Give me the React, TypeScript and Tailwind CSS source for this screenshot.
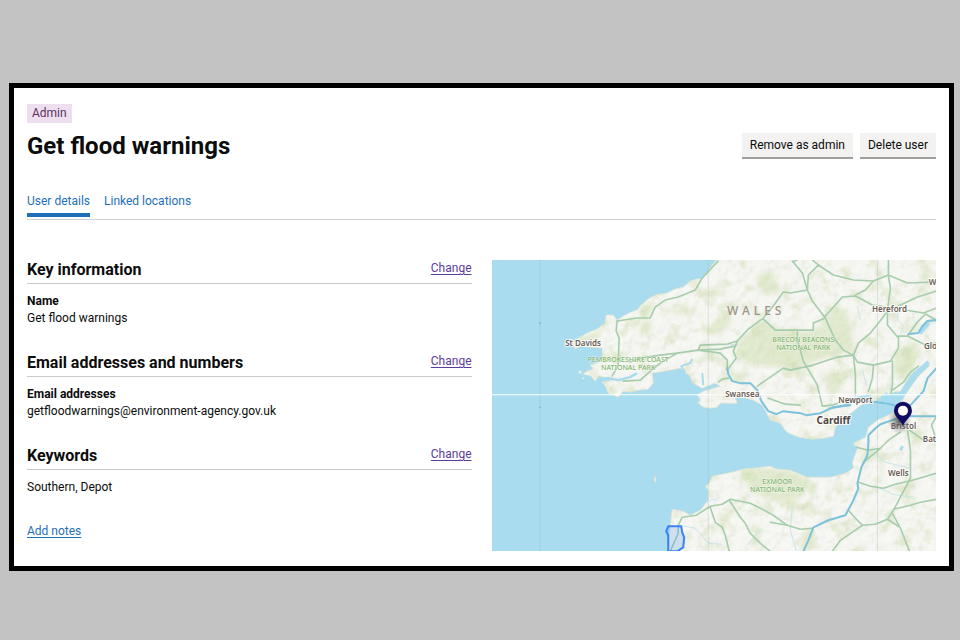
import type { ReactNode } from "react";

const LAND =
  "M718 258 712 265 708 271 702 279 696 279 690 281 683 287 675 289 667 293 655 295 648 299 640 306 637 310 631 312 625 315 617 320 613 315 606 315 605 323 597 329 587 333 578 338 573 343 575 349 581 346 590 347 602 348 602 353 603 358 597 363 590 365 593 369 587 371 583 374 591 376 595 381 599 376 608 378 617 379 602 382 606 387 608 393 618 397 623 391 630 392 637 390 648 389 653 383 652 373 665 371 680 368 685 373 689 375 693 383 702 388 715 383 720 386 710 389 703 391 697 395 700 399 698 403 703 407 710 408 717 407 720 403 737 403 735 398 740 396 753 400 762 405 765 410 770 420 780 423 784 429 788 433 799 437 811 439 823 438 833 436 835 427 845 417 852 412 862 404 873 403 878 398 890 393 900 391 908 378 918 368 928 363 929 366 918 376 908 390 902 400 892 413 877 420 868 427 865 437 853 443 857 448 852 462 853 468 845 473 830 477 807 477 790 470 777 469 770 466 762 467 743 469 727 473 712 476 709 483 705 486 708 490 708 500 700 510 690 515 683 511 672 509 670 525 668 553 938 553 938 258Z";

const GREEN_ROADS = [
  "M617 321 637 318 650 318 655 307 665 300 678 297 695 290 702 278 718 261",
  "M617 321 616 331 619 338 618 365 612 376",
  "M623 381 640 380 648 373 660 363 677 353",
  "M630 362 640 358 660 355 677 353 698 350 720 353 727 360 727 370",
  "M698 350 700 345 727 344 737 341 748 329 763 318 773 306 783 292 790 293 807 290",
  "M698 350 720 349 734 346",
  "M737 341 733 351 736 358 727 370",
  "M763 319 775 330 797 330 813 330 813 323 825 318",
  "M757 386 783 368 790 370 813 365 837 357 853 355",
  "M718 382 722 379 728 378",
  "M792 261 802 273 807 290 812 301 825 318 835 340 843 350 853 355",
  "M793 262 800 258M807 290 808 275 818 265 833 275 853 280 873 281 888 275 907 283 936 282",
  "M818 265 812 260M888 260 888 276 890 288 887 310 887 325 898 338 898 348 890 361 873 365 857 362 853 355 858 343 870 333 882 318 887 310",
  "M825 316 842 297 855 296 872 305 886 307",
  "M855 295 865 290 873 281",
  "M898 306 917 297 936 291M905 310 923 313 936 308",
  "M898 336 907 336 917 322 925 314 936 320M907 336 925 345 936 343",
  "M797 332 797 340 803 361 817 385 820 398 822 406",
  "M853 355 855 375 855 395M873 365 872 378 868 391",
  "M892 361 892 385 890 395M892 390 903 382 910 372 918 366",
  "M907 430 910 450 910 478 893 510 887 519 875 524 862 525 840 540 832 551",
  "M858 482 870 486 883 488 895 484 912 480 936 473",
  "M893 509 910 505 920 502 936 499M892 513 900 528 909 551M887 519 898 526",
  "M848 510 855 518 862 525M770 522 787 525 800 529 812 528",
  "M900 432 888 440 878 450 863 462M856 447 868 450 880 448",
  "M909 430 923 440M936 416 931 425 936 440",
  "M670 551 678 533 678 525 682 517 696 515 710 506 722 504 730 499 750 503 762 509 773 515 787 525",
  "M710 507 715 522 722 527 725 535 727 543 729 551",
  "M729 500 740 517 745 523 750 533 760 543 770 551",
  "M822 406 832 405 840 402M768 398 785 404 800 405",
];

const MOTORWAYS = [
  "M727 368 728 374 732 381 740 383 750 383 757 390 761 401 768 411 776 414 783 411 800 413 806 415 820 413 833 407 850 405",
  "M830 408 845 405 857 399 868 401 885 403 905 408 910 416 936 416",
  "M905 415 892 420 880 424 875 428 868 435 868 443 867 455 861 467 857 483 858 488 853 500 845 515 828 520 813 527 808 540 803 551",
  "M910 405 923 391 927 378 936 368",
  "M908 334 918 333 922 326 927 321 936 320",
];

const MINOR_RIVERS =
  "M708 502 712 499 716 500 720 496M680 525 695 528 708 543 722 544M792 506 790 530 796 551M898 312 897 320 903 326 900 334M872 450 885 462 910 468M727 344 738 345M860 320 857 306M862 370 866 385M875 486 892 494 912 497M747 545 755 535 762 528";

const PARKS = [
  "M738 341 750 330 764 319 780 329 797 330 812 332 828 318 838 306 847 312 852 334 853 352 838 354 812 362 795 370 775 366 752 366 738 354Z",
  "M739 469 762 467 790 470 804 478 806 493 790 502 772 501 752 492 744 480Z",
  "M597 353 608 353 608 360 602 363ZM608 385 618 388 612 394ZM640 306 650 303 651 315 641 318ZM577 339 601 330 596 344Z",
  "M702 332 716 320 728 312 731 323 716 335ZM756 276 772 270 780 293 765 295 757 286Z",
  "M893 352 915 340 920 355 905 373 894 374ZM822 376 835 370 842 388 830 398Z",
  "M640 322 652 320 650 332 640 336ZM910 432 922 430 925 440 914 446ZM862 450 875 447 874 457 863 462Z",
];

function MapLabel({ x, y, children }: { x: number; y: number; children: ReactNode }) {
  return (
    <text x={x} y={y} textAnchor="middle" className="fill-[#685a52] stroke-white/80 stroke-2 text-[8px] font-semibold [paint-order:stroke]">
      {children}
    </text>
  );
}

function ParkLabel({ x, y, children }: { x: number; y: number; children: ReactNode }) {
  return (
    <text x={x} y={y} textAnchor="middle" className="fill-[#82b56f] stroke-white/60 stroke-1 text-[7px] font-medium [paint-order:stroke]">
      {children}
    </text>
  );
}

function LocationMap() {
  return (
    <svg viewBox="492 260 444 291" role="img" aria-label="Map of South Wales and Bristol" className="block h-auto w-full bg-[#aadcef] font-['Noto_Sans',sans-serif]">
      <defs>
        <clipPath id="land">
          <path d={LAND} />
        </clipPath>
        <filter id="relief" x="0" y="0" width="1" height="1">
          <feTurbulence type="fractalNoise" baseFrequency="0.09" numOctaves="3" seed="8" />
          <feDiffuseLighting surfaceScale="3" lightingColor="#ffffff">
            <feDistantLight azimuth="225" elevation="60" />
          </feDiffuseLighting>
        </filter>
        <filter id="woods" x="0" y="0" width="1" height="1" colorInterpolationFilters="sRGB">
          <feTurbulence type="fractalNoise" baseFrequency="0.06" numOctaves="4" seed="21" />
          <feColorMatrix values="0 0 0 0 0.82  0 0 0 0 0.88  0 0 0 0 0.7  4 0 0 0 -2" />
        </filter>
        <filter id="soften">
          <feGaussianBlur stdDeviation="2" />
        </filter>
        <radialGradient id="city">
          <stop offset="0" stopColor="#333" stopOpacity="0.8" />
          <stop offset="1" stopColor="#777" stopOpacity="0" />
        </radialGradient>
      </defs>
      <path d={LAND} fill="#f6f6f2" stroke="#dfe4d2" strokeWidth="0.8" />
      <g clipPath="url(#land)">
        <g fill="#dce7c4" opacity="0.75" filter="url(#soften)">
          {PARKS.map((d) => (
            <path key={d} d={d} />
          ))}
        </g>
        <rect x="570" y="260" width="366" height="291" filter="url(#woods)" opacity="0.5" />
        <rect x="570" y="260" width="366" height="291" filter="url(#relief)" opacity="0.13" className="mix-blend-multiply" />
      </g>
      <g fill="#eceee4">
        <circle cx="580" cy="372" r="1.5" />
        <circle cx="583" cy="378" r="1" />
        <path d="M654 474 656 478 656 482 654 482Z" stroke="#c2cec9" strokeWidth="0.5" />
      </g>
      <g fill="none" stroke="#aadcef" strokeLinejoin="round">
        <path d="M598 379 608 378 618 380 630 377 637 373" strokeWidth="2.5" />
        <path d="M685 373 681 366 690 363 692 359M703 385 702 373" strokeWidth="2" />
        <path d="M900 396 912 376 928 362" strokeWidth="4" />
        <path d="M919 333 928 322" strokeWidth="5" />
        <path d="M900 450 902 446" strokeWidth="3" />
        <path d={MINOR_RIVERS} stroke="#c5e3ea" strokeWidth="0.9" />
      </g>
      <g fill="none" strokeLinejoin="round" strokeLinecap="round">
        {GREEN_ROADS.map((d) => (
          <path key={d} d={d} stroke="#a6cdac" strokeWidth="1.6" />
        ))}
        {MOTORWAYS.map((d) => (
          <path key={d} d={d} stroke="#7cc2da" strokeWidth="2" />
        ))}
        <path d="M855 398 870 396M879 400 886 394M885 401 895 393" stroke="#a5e0f2" strokeWidth="3" strokeDasharray="2 1" />
      </g>
      <path d="M540 260V551M708 260V551M877 260V551" stroke="#9babaf" strokeOpacity="0.35" strokeWidth="0.8" />
      <path d="M539 324 541 322M539 407 541 407" stroke="#91aab4" />
      <path d="M492 394.500H936" stroke="#fff" />
      <text x="756" y="315" textAnchor="middle" className="fill-[#9e958b] text-[12px] font-medium tracking-[4px]">WALES</text>
      <ParkLabel x={628} y={362}>PEMBROKESHIRE COAST</ParkLabel>
      <ParkLabel x={628} y={370}>NATIONAL PARK</ParkLabel>
      <ParkLabel x={803} y={342}>BRECON BEACONS</ParkLabel>
      <ParkLabel x={803} y={350}>NATIONAL PARK</ParkLabel>
      <ParkLabel x={777} y={484}>EXMOOR</ParkLabel>
      <ParkLabel x={777} y={492}>NATIONAL PARK</ParkLabel>
      <MapLabel x={583} y={346}>St Davids</MapLabel>
      <MapLabel x={742} y={397}>Swansea</MapLabel>
      <MapLabel x={889} y={312}>Hereford</MapLabel>
      <MapLabel x={855} y={403}>Newport</MapLabel>
      <MapLabel x={898} y={476}>Wells</MapLabel>
      <MapLabel x={932} y={285}>W</MapLabel>
      <MapLabel x={930} y={349}>Glo</MapLabel>
      <MapLabel x={929} y={442}>Bat</MapLabel>
      <text x="833" y="424" textAnchor="middle" className="fill-[#4e4640] stroke-white/80 stroke-2 text-[10px] font-bold [paint-order:stroke]">Cardiff</text>
      <MapLabel x={903} y={429}>Bristol</MapLabel>
      <ellipse cx="899" cy="421" rx="12" ry="13" fill="url(#city)" />
      <path d="M902.500 425.500C900 420 893.500 416 893.500 410.500A9 9 0 0 1 911.500 410.500C911.500 416 905 420 902.500 425.500Z" fill="#120b62" />
      <circle cx="902.500" cy="410.500" r="5" fill="#fff" />
      <path d="M668 526H681L682 532 684 537 683 547 677 551H668V535L666 531Z" fill="#3388ff" fillOpacity="0.2" stroke="#3b82f6" strokeWidth="2" strokeLinejoin="round" />
    </svg>
  );
}

function Section({ title, children }: { title: string; children: ReactNode }) {
  return (
    <section>
      <div className="flex h-6 items-start justify-between border-b border-[#c8cacb]">
        <h2 className="text-[16px] leading-5 font-bold">{title}</h2>
        <a href="#change" aria-label={`Change ${title}`} className="text-[12px] leading-4 text-[#5b3c99] underline underline-offset-2">
          Change
        </a>
      </div>
      <div className="pt-[9px] text-[12px] leading-[17px]">{children}</div>
    </section>
  );
}

export default function App() {
  return (
    <div className="min-h-screen bg-[#c3c3c3] pt-[83px] pr-1.5 pb-16 pl-[9px] font-[Roboto,sans-serif] text-[#0b0c0c]">
      <main className="border-[5px] border-black bg-white px-[13px] pt-4 pb-[15px]">
        <header className="flex items-end justify-between">
          <div>
            <strong className="block w-fit bg-[#eedfee] px-[5px] text-[12px] leading-[19px] font-normal text-[#5c3163]">Admin</strong>
            <h1 className="mt-[7px] text-[24px] leading-8 font-bold">Get flood warnings</h1>
          </div>
          <div className="flex gap-[7px] pb-[3px]">
            <button type="button" className="border-b-2 border-[#a09f9e] bg-[#f3f2f1] px-2 text-[12px] leading-6">Remove as admin</button>
            <button type="button" className="border-b-2 border-[#a09f9e] bg-[#f3f2f1] px-2 text-[12px] leading-6">Delete user</button>
          </div>
        </header>
        <nav aria-label="User sections" className="mt-[30px] flex h-7 items-start gap-3.5 border-b border-[#cfd1d2] text-[12px] leading-[18px] text-[#1d70b8]">
          <a href="#details" aria-current="page" className="border-b-4 border-[#1d70b8] pb-[3px]">User details</a>
          <a href="#locations">Linked locations</a>
        </nav>
        <div className="mt-10 grid grid-cols-2 gap-5">
          <div className="flex flex-col">
            <div className="grid grid-cols-1 grid-rows-[93px_93px_77px]">
              <Section title="Key information">
                <h3 className="font-bold">Name</h3>
                <p>Get flood warnings</p>
              </Section>
              <Section title="Email addresses and numbers">
                <h3 className="font-bold">Email addresses</h3>
                <p>getfloodwarnings@environment-agency.gov.uk</p>
              </Section>
              <Section title="Keywords">
                <p>Southern, Depot</p>
              </Section>
            </div>
            <a href="#notes" className="self-start text-[12px] leading-4 text-[#1d70b8] underline underline-offset-2">Add notes</a>
          </div>
          <LocationMap />
        </div>
      </main>
    </div>
  );
}
